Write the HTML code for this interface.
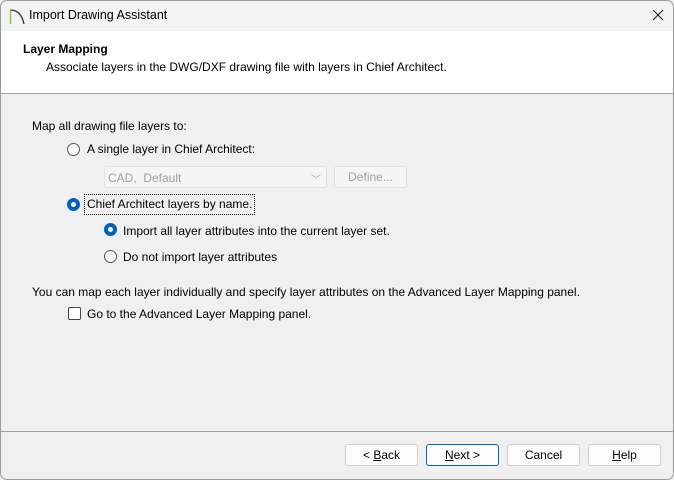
<!DOCTYPE html>
<html><head><style>
body{margin:0;width:674px;height:480px;overflow:hidden;font-family:"Liberation Sans",sans-serif;font-size:12px;color:#000}
.win{position:absolute;left:0;top:0;width:674px;height:480px;background:#f0f0f0;overflow:hidden}
.frame{position:absolute;left:0;top:0;width:672px;height:478px;border:1px solid #9a9a9a;border-radius:7px;pointer-events:none}
.title{position:absolute;left:0;top:0;width:674px;height:31px;background:#f3f3f3}
.hdr{position:absolute;left:0;top:31px;width:674px;height:62px;background:#fff;border-bottom:1px solid #a0a0a0}
.t{position:absolute;white-space:nowrap}
.rad{position:absolute;width:11px;height:11px;border:1px solid #555;border-radius:50%;background:#fff}
.rad.on{border:none;width:13px;height:13px;background:#0060c0}
.rad.on:after{content:"";position:absolute;left:4px;top:4px;width:5px;height:5px;border-radius:50%;background:#fff}
.btn{position:absolute;top:445px;width:71px;height:20px;border:1px solid #d0d0d0;border-radius:3px;background:#fdfdfd;text-align:center;line-height:20px}
u{text-decoration:underline}
</style></head><body><div class="win">
<div class="title">
<svg style="position:absolute;left:9px;top:7px" width="16" height="18"><path d="M1.5 3V17" stroke="#8dc63f" stroke-width="1.5" fill="none"/><path d="M1.5 3Q12 3 15 17" stroke="#333" stroke-width="1.3" fill="none"/></svg>
<div class="t" style="left:29px;top:8px;font-size:12.5px">Import Drawing Assistant</div>
<svg style="position:absolute;left:652px;top:9px" width="12" height="12"><path d="M1 1L11 11M11 1L1 11" stroke="#222" stroke-width="1.1"/></svg>
</div>
<div class="hdr">
<div class="t" style="left:23px;top:11px;font-weight:bold">Layer Mapping</div>
<div class="t" style="left:46px;top:29px">Associate layers in the DWG/DXF drawing file with layers in Chief Architect.</div>
</div>
<div class="t" style="left:32px;top:119px">Map all drawing file layers to:</div>
<div class="rad" style="left:67px;top:143px"></div>
<div class="t" style="left:87px;top:142px">A single layer in Chief Architect:</div>
<div style="position:absolute;left:104px;top:166px;width:221px;height:20px;border:1px solid #e2e2e2;border-radius:3px;background:#f5f5f5"></div>
<div class="t" style="left:108px;top:171px;color:#a0a0a0">CAD,&nbsp; Default</div>
<div class="t" style="left:311px;top:171px;color:#aaa;font-size:10px">﹀</div>
<div style="position:absolute;left:334px;top:166px;width:71px;height:20px;border:1px solid #e2e2e2;border-radius:3px;background:#f5f5f5;color:#a0a0a0;text-align:center;line-height:20px">Define...</div>
<div class="rad on" style="left:67px;top:198px"></div>
<div class="t" style="left:84px;top:194px;border:1px dotted #000;padding:2px 2px;height:15px;line-height:15px">Chief Architect layers by name.</div>
<div class="rad on" style="left:104px;top:223px"></div>
<div class="t" style="left:123px;top:224px">Import all layer attributes into the current layer set.</div>
<div class="rad" style="left:104px;top:250px"></div>
<div class="t" style="left:123px;top:250px">Do not import layer attributes</div>
<div class="t" style="left:32px;top:285px">You can map each layer individually and specify layer attributes on the Advanced Layer Mapping panel.</div>
<div style="position:absolute;left:68px;top:307px;width:11px;height:11px;border:1px solid #444;border-radius:2px;background:#fff"></div>
<div class="t" style="left:87px;top:307px">Go to the Advanced Layer Mapping panel.</div>
<div style="position:absolute;left:0;top:431px;width:674px;height:1px;background:#a0a0a0"></div>
<div class="btn" style="left:345px;top:444px">&lt; <u>B</u>ack</div>
<div class="btn" style="left:426px;top:444px;border-color:#0067c0"><u>N</u>ext &gt;</div>
<div class="btn" style="left:507px;top:444px">Cancel</div>
<div class="btn" style="left:588px;top:444px"><u>H</u>elp</div>
<div class="frame"></div>
</div></body></html>
